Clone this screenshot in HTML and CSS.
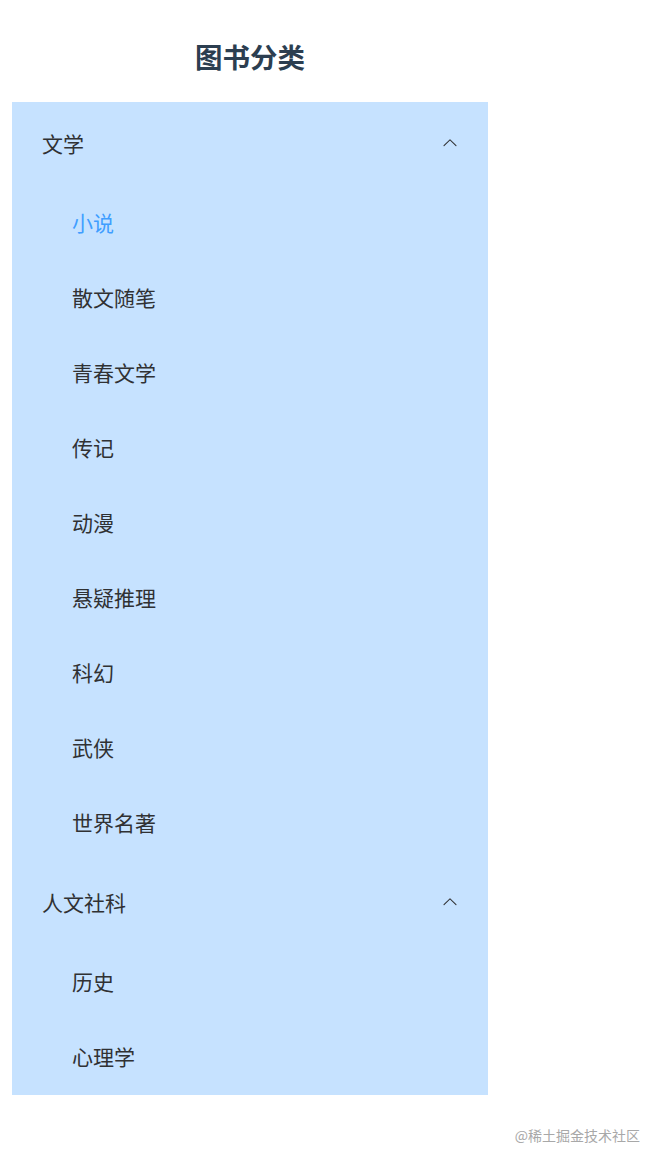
FILE: index.html
```html
<!DOCTYPE html>
<html lang="zh-CN">
<head>
<meta charset="utf-8">
<title>图书分类</title>
<link rel="stylesheet" href="styles.css">
</head>
<body>
<div class="page">
  <h2 class="heading">图书分类</h2>
  <ul class="menu">
    <li class="submenu">
      <div class="submenu-title">
        <span>文学</span>
        <svg class="arrow" viewBox="0 0 1024 1024"><path d="M831.872 340.864 512 652.672 192.128 340.864a30.592 30.592 0 0 0-42.752 0 29.12 29.12 0 0 0 0 41.6L489.664 714.24a32 32 0 0 0 44.672 0l340.288-331.712a29.12 29.12 0 0 0 0-41.728 30.592 30.592 0 0 0-42.752 0z"/></svg>
      </div>
      <ul class="items">
        <li class="item active">小说</li>
        <li class="item">散文随笔</li>
        <li class="item">青春文学</li>
        <li class="item">传记</li>
        <li class="item">动漫</li>
        <li class="item">悬疑推理</li>
        <li class="item">科幻</li>
        <li class="item">武侠</li>
        <li class="item">世界名著</li>
      </ul>
    </li>
    <li class="submenu">
      <div class="submenu-title">
        <span>人文社科</span>
        <svg class="arrow" viewBox="0 0 1024 1024"><path d="M831.872 340.864 512 652.672 192.128 340.864a30.592 30.592 0 0 0-42.752 0 29.12 29.12 0 0 0 0 41.6L489.664 714.24a32 32 0 0 0 44.672 0l340.288-331.712a29.12 29.12 0 0 0 0-41.728 30.592 30.592 0 0 0-42.752 0z"/></svg>
      </div>
      <ul class="items">
        <li class="item">历史</li>
        <li class="item">心理学</li>
      </ul>
    </li>
  </ul>
</div>
<div class="watermark">@稀土掘金技术社区</div>
</body>
</html>
```

FILE: styles.css
```css
html, body {
  margin: 0;
  padding: 0;
  background: #ffffff;
}

body {
  font-family: "Noto Sans CJK SC", "Noto Sans", sans-serif;
  min-height: 1164px;
  position: relative;
}

.page {
  width: 476px;
  margin-left: 12px;
}

.heading {
  margin: 36px 0 26px;
  height: 40px;
  line-height: 40px;
  text-align: center;
  font-size: 27.5px;
  font-weight: 700;
  color: #2c3e50;
}

.menu {
  list-style: none;
  margin: 0;
  padding: 0;
  background: #c6e2ff;
}

.submenu {
  margin: 0;
  padding: 0;
}

.submenu-title {
  box-sizing: border-box;
  height: 84px;
  padding: 0 29px 3px 30px;
  display: flex;
  align-items: center;
  justify-content: space-between;
  font-size: 21px;
  color: #303133;
}

.arrow {
  width: 18px;
  height: 18px;
  fill: #303133;
  transform: rotate(180deg);
}

.items {
  list-style: none;
  margin: 0;
  padding: 0;
}

.item {
  height: 75px;
  line-height: 73px;
  padding-left: 60px;
  font-size: 21px;
  color: #303133;
}

.item.active {
  color: #409eff;
}

.watermark {
  position: absolute;
  right: 22px;
  top: 1125px;
  font-size: 14px;
  line-height: 20px;
  color: #a8a8a8;
}
```
